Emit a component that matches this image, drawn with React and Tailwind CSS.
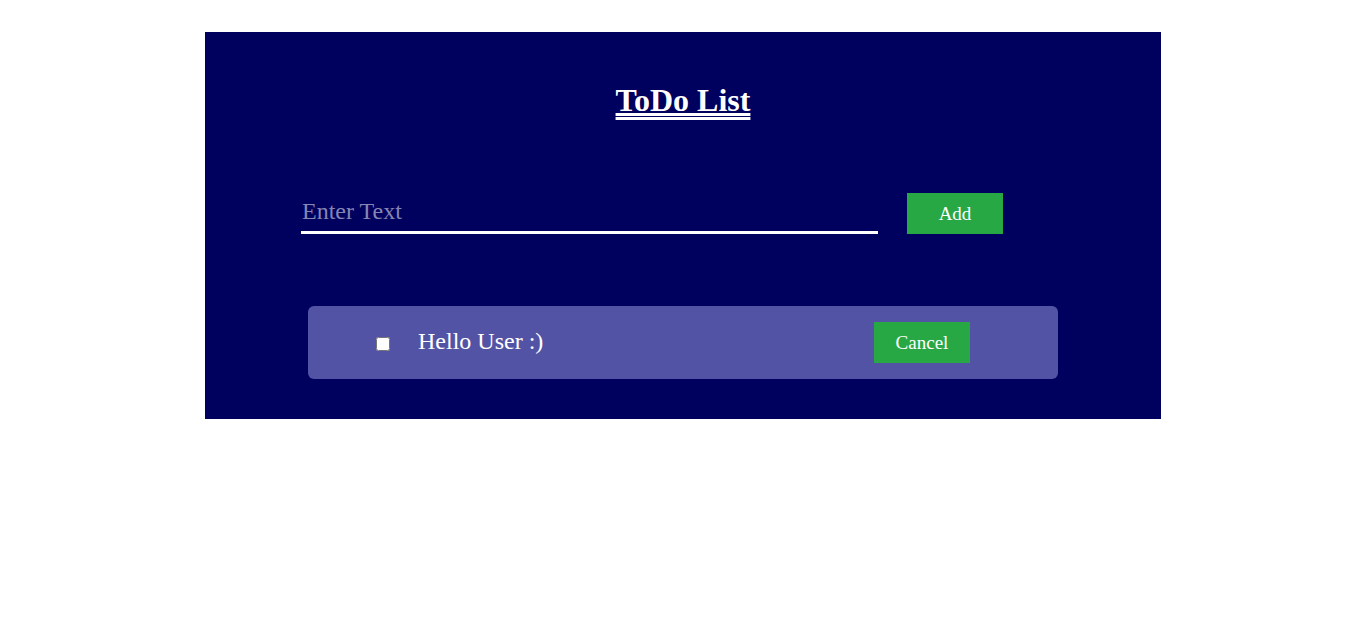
import React, { useState } from "react";

const serif = { fontFamily: '"Liberation Serif", "Times New Roman", serif' };

const App = () => {
    const [text, setText] = useState("");
    const [items, setItems] = useState(["Hello User :)"]);

    return (
        <div className="min-h-screen bg-white pt-8" style={serif}>
            <div className="w-[956px] mx-auto bg-[#00005e] pt-[50px] pb-[40px]">

                {/* Title */}
                <h1 className="text-center text-white text-[32px] font-bold leading-[37px] underline decoration-double">
                    ToDo List
                </h1>

                {/* Input row */}
                <div className="flex items-center mt-[74px] pl-[96px]">
                    <input
                        type="text"
                        value={text}
                        onChange={(e) => setText(e.target.value)}
                        placeholder="Enter Text"
                        style={serif}
                        className="w-[577px] h-[38px] mt-[2px] bg-transparent border-b-[3px] border-white text-white text-[24px] pl-px pb-[3px] outline-none placeholder:text-[#8585b3]"
                    />
                    <button style={serif} className="ml-[29px] w-[96px] h-[41px] pt-[2px] bg-[#28a745] text-white text-[19px]">
                        Add
                    </button>
                </div>

                {/* List */}
                <div className="mt-[72px] flex flex-col gap-4">
                    {items.map((item, i) => (
                        <div
                            key={i}
                            className="w-[750px] h-[73px] ml-[103px] bg-[#5353a6] rounded-[6px] flex items-center"
                        >
                            <input type="checkbox" className="ml-[68px] mt-[2px] w-[14px] h-[14px]" />
                            <span className="ml-[28px] mb-[3px] text-white text-[24px]">{item}</span>
                            <button style={serif} className="ml-auto mr-[88px] w-[96px] h-[41px] pt-[2px] bg-[#28a745] text-white text-[19px]">
                                Cancel
                            </button>
                        </div>
                    ))}
                </div>

            </div>
        </div>
    );
};

export default App;
